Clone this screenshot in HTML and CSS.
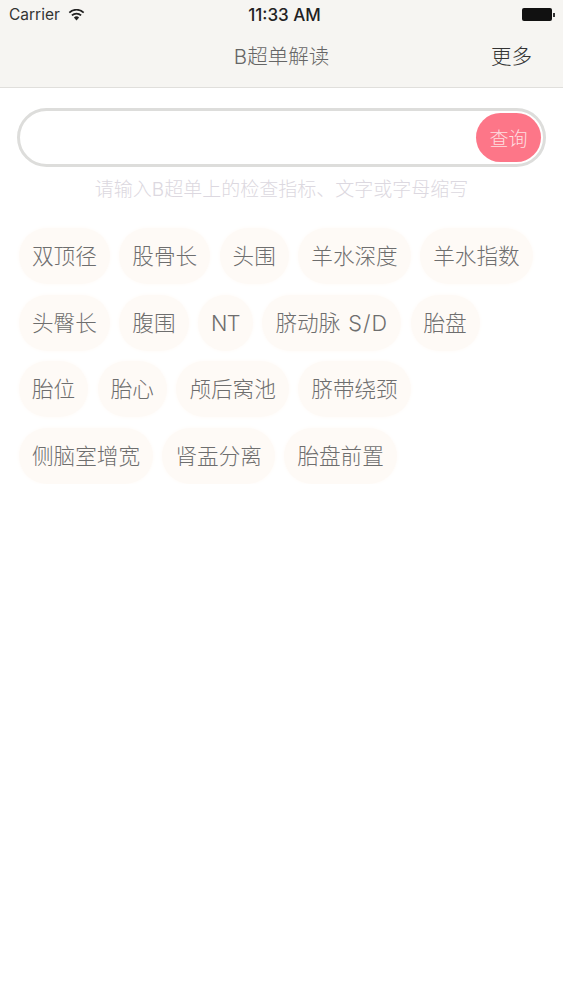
FILE: index.html
```html
<!DOCTYPE html>
<html lang="zh-CN">
<head>
    <meta charset="UTF-8">
    <meta name="viewport" content="width=device-width, initial-scale=1.0">
    <title>B超单解读</title>
    <link rel="stylesheet" href="styles.css">
</head>
<body>

    <header class="top-bar">
        <div class="status-bar">
            <div class="status-left">
                <span class="carrier">Carrier</span>
                <svg class="wifi" width="17" height="12" viewBox="0 0 17 12">
                    <path d="M8.5 11.6 5.9 8.6a3.7 3.7 0 0 1 5.2 0z" fill="#222"/>
                    <path d="M3.9 6.4a6.6 6.6 0 0 1 9.2 0" fill="none" stroke="#222" stroke-width="1.7"/>
                    <path d="M1.3 3.6a10.4 10.4 0 0 1 14.4 0" fill="none" stroke="#222" stroke-width="1.7"/>
                </svg>
            </div>
            <span class="clock">11:33 AM</span>
            <div class="battery">
                <div class="battery-body"></div>
                <div class="battery-tip"></div>
            </div>
        </div>
        <nav class="nav-bar">
            <span class="nav-spacer"></span>
            <span class="nav-title">B超单解读</span>
            <span class="nav-more">更多</span>
        </nav>
    </header>

    <main class="content">
        <div class="search-box">
            <input class="search-input" type="text">
            <button class="search-btn">查询</button>
        </div>
        <p class="hint">请输入B超单上的检查指标、文字或字母缩写</p>

        <div class="tags">
            <span class="tag">双顶径</span>
            <span class="tag">股骨长</span>
            <span class="tag">头围</span>
            <span class="tag">羊水深度</span>
            <span class="tag">羊水指数</span>
            <span class="tag">头臀长</span>
            <span class="tag">腹围</span>
            <span class="tag tag-narrow">NT</span>
            <span class="tag tag-spaced">脐动脉 <span class="tag-latin">S/D</span></span>
            <span class="tag">胎盘</span>
            <span class="tag">胎位</span>
            <span class="tag">胎心</span>
            <span class="tag">颅后窝池</span>
            <span class="tag">脐带绕颈</span>
            <span class="tag">侧脑室增宽</span>
            <span class="tag">肾盂分离</span>
            <span class="tag">胎盘前置</span>
        </div>
    </main>

</body>
</html>
```

FILE: styles.css
```css
* {
    box-sizing: border-box;
    font-family: "Inter", "Noto Sans CJK SC", sans-serif;
}

body {
    margin: 0;
    background-color: #fff;
    color: #333;
}

.top-bar {
    height: 88px;
    background-color: #f6f5f2;
    border-bottom: 1px solid #e0dfdc;
}

.status-bar {
    height: 29px;
    padding: 0 8px 0 9px;
    display: flex;
    align-items: center;
    justify-content: space-between;
    font-size: 15px;
    color: #222;
}

.status-left {
    width: 125px;
    display: flex;
    align-items: center;
    gap: 8px;
}

.carrier {
    color: #333;
    font-size: 15.5px;
}

.wifi {
    display: block;
}

.clock {
    font-size: 17px;
    font-weight: 500;
}

.battery {
    width: 120px;
    display: flex;
    align-items: center;
    justify-content: flex-end;
}

.battery-body {
    width: 30px;
    height: 13px;
    background-color: #111;
    border-radius: 2px;
}

.battery-tip {
    width: 2px;
    height: 4px;
    margin-left: 1px;
    background-color: #333;
}

.nav-bar {
    height: 58px;
    padding: 0 31px 6px;
    display: flex;
    align-items: center;
    justify-content: space-between;
    font-size: 20.5px;
    font-weight: 300;
}

.nav-spacer {
    width: 41px;
}

.nav-title {
    color: #666;
}

.nav-more {
    color: #333;
}

.content {
    padding: 20px 19px 0 17px;
}

.search-box {
    width: 529px;
    height: 59px;
    padding-right: 2px;
    display: flex;
    align-items: center;
    background-color: #fff;
    border: 3px solid #dddddb;
    border-radius: 30px;
}

.search-input {
    flex: 1;
    min-width: 0;
    height: 100%;
    padding: 0 20px;
    border: none;
    outline: none;
    background: transparent;
}

.search-btn {
    width: 65px;
    height: 49px;
    padding: 0;
    border: none;
    border-radius: 25px;
    background-color: #fd7688;
    color: #fddfe0;
    font-size: 19px;
    font-weight: 300;
}

.hint {
    width: 529px;
    margin: 12px 0 0;
    text-align: center;
    font-size: 19px;
    font-weight: 300;
    line-height: 22px;
    color: #dcd8e0;
}

.tags {
    margin: 27px 0 0 2px;
    display: flex;
    flex-wrap: wrap;
    gap: 10.5px 9.5px;
}

.tag {
    height: 56px;
    padding: 0 13px;
    display: block;
    background-color: #fefaf6;
    box-shadow: 0 0 4px #fefaf6;
    border-radius: 28px;
    font-size: 21.6px;
    font-weight: 300;
    line-height: 56px;
    color: #6e6e6e;
}

.tag-narrow {
    letter-spacing: -0.6px;
}

.tag-spaced {
    word-spacing: 2px;
}

.tag-latin {
    letter-spacing: 1px;
}
```
